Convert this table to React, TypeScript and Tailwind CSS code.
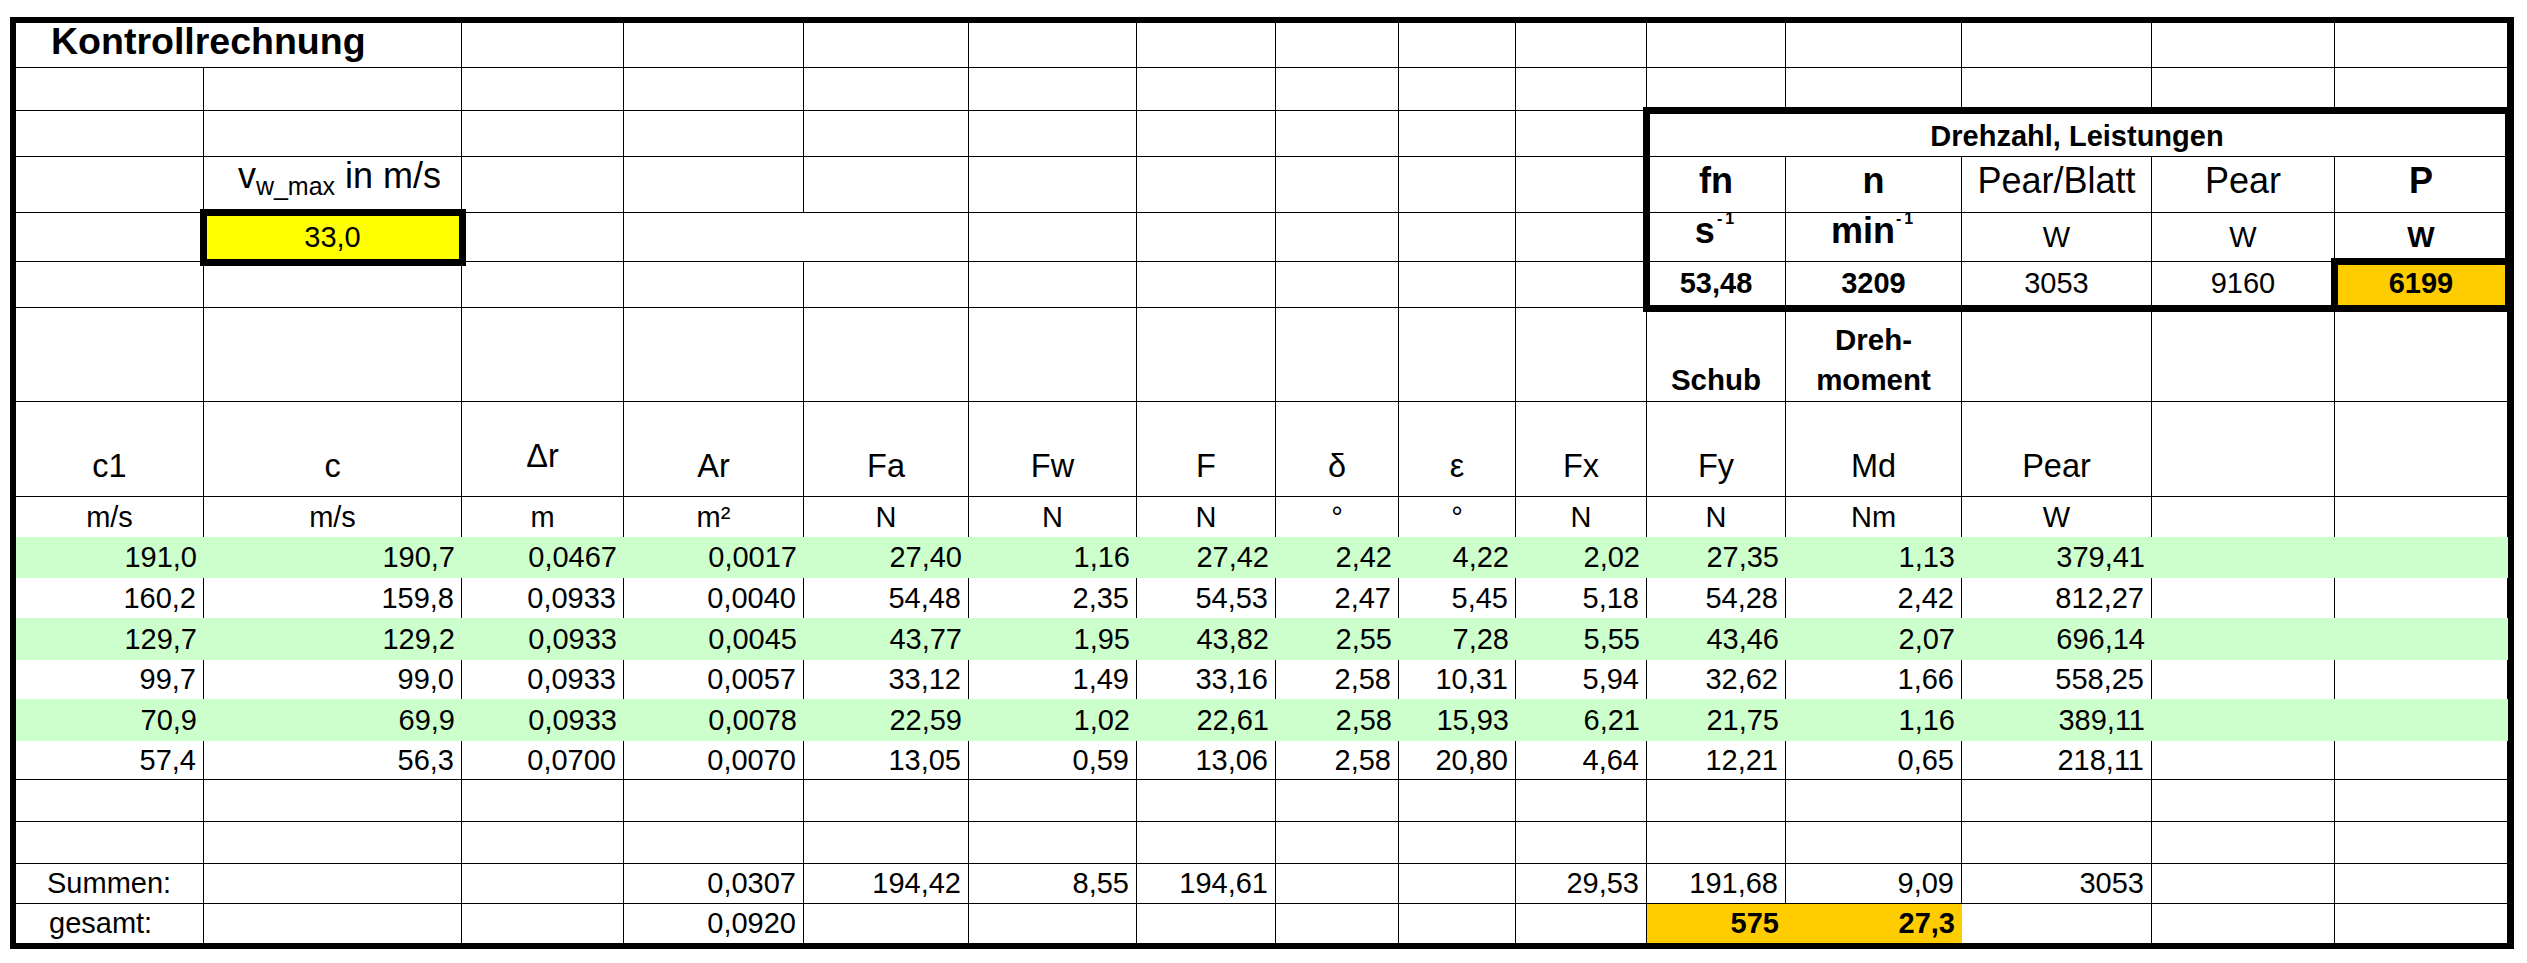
import React from 'react'

type CellProps = { className?: string; children?: React.ReactNode }

function Cell({ className = '', children }: CellProps) {
  return <div className={`flex whitespace-nowrap ${className}`}>{children}</div>
}

// gridlines: right + bottom edge of every cell
const line = 'border-r border-b border-black'
const num = 'items-center justify-end pr-[7px] text-[29px]'

const data = [
  ['191,0', '190,7', '0,0467', '0,0017', '27,40', '1,16', '27,42', '2,42', '4,22', '2,02', '27,35', '1,13', '379,41'],
  ['160,2', '159,8', '0,0933', '0,0040', '54,48', '2,35', '54,53', '2,47', '5,45', '5,18', '54,28', '2,42', '812,27'],
  ['129,7', '129,2', '0,0933', '0,0045', '43,77', '1,95', '43,82', '2,55', '7,28', '5,55', '43,46', '2,07', '696,14'],
  ['99,7', '99,0', '0,0933', '0,0057', '33,12', '1,49', '33,16', '2,58', '10,31', '5,94', '32,62', '1,66', '558,25'],
  ['70,9', '69,9', '0,0933', '0,0078', '22,59', '1,02', '22,61', '2,58', '15,93', '6,21', '21,75', '1,16', '389,11'],
  ['57,4', '56,3', '0,0700', '0,0070', '13,05', '0,59', '13,06', '2,58', '20,80', '4,64', '12,21', '0,65', '218,11'],
]

const headers = ['c1', 'c', 'Δr', 'Ar', 'Fa', 'Fw', 'F', 'δ', 'ε', 'Fx', 'Fy', 'Md', 'Pear', '', '']
const units = ['m/s', 'm/s', 'm', 'm²', 'N', 'N', 'N', '°', '°', 'N', 'N', 'Nm', 'W', '', '']
const summen = ['', '', '0,0307', '194,42', '8,55', '194,61', '', '', '29,53', '191,68', '9,09', '3053', '', '']

function empty(n: number, className = line) {
  return Array.from({ length: n }, (_, i) => <Cell key={i} className={className} />)
}

export default function App() {
  return (
    <div className="min-h-screen bg-white pt-[17px] pl-[10px]">
      <div className="grid w-fit border-[6px] border-black text-black leading-none font-['Liberation_Sans',Arial,sans-serif] grid-cols-[188px_258px_162px_180px_165px_168px_139px_123px_117px_131px_139px_176px_190px_183px_173px] grid-rows-[45px_43px_46px_56px_49px_46px_94px_95px_40px_41px_40px_42px_39px_42px_39px_42px_42px_40px_39px]">
        {/* Zeile 1 */}
        <Cell className={`${line} col-span-2 items-start pl-[35px] text-[37.5px] font-bold`}>Kontrollrechnung</Cell>
        {empty(13)}

        {/* Zeile 2 */}
        {empty(15)}

        {/* Zeile 3 */}
        {empty(10)}

        {/* Drehzahl, Leistungen */}
        <div className="col-start-11 col-span-5 row-start-3 row-span-4 grid grid-cols-[139px_176px_190px_183px_173px] grid-rows-[46px_56px_49px_46px] outline-[7px] outline-black outline-offset-[-3px]">
          <Cell className={`${line} col-span-5 items-end justify-center pb-[5px] text-[29px] font-bold`}>Drehzahl, Leistungen</Cell>

          <Cell className={`${line} items-end justify-center pb-[13px] text-[36px] font-bold`}>fn</Cell>
          <Cell className={`${line} items-end justify-center pb-[13px] text-[36px] font-bold`}>n</Cell>
          <Cell className={`${line} items-end justify-center pb-[13px] text-[36px]`}>Pear/Blatt</Cell>
          <Cell className={`${line} items-end justify-center pb-[13px] text-[36px]`}>Pear</Cell>
          <Cell className={`${line} items-end justify-center pb-[13px] text-[36px] font-bold`}>P</Cell>

          <Cell className={`${line} items-end justify-center pb-[12px] text-[36px] font-bold`}>
            <span>
              s<sup className="text-[16px] top-[-19px] ml-[2px] tracking-[3px]">-1</sup>
            </span>
          </Cell>
          <Cell className={`${line} items-end justify-center pb-[12px] text-[36px] font-bold`}>
            <span>
              min<sup className="text-[16px] top-[-19px] ml-[1px] tracking-[3px]">-1</sup>
            </span>
          </Cell>
          <Cell className={`${line} items-center justify-center text-[29px]`}>W</Cell>
          <Cell className={`${line} items-center justify-center text-[29px]`}>W</Cell>
          <Cell className={`${line} items-center justify-center text-[29px] font-bold`}>W</Cell>

          <Cell className={`${line} items-center justify-center pb-[3px] text-[29px] font-bold`}>53,48</Cell>
          <Cell className={`${line} items-center justify-center pb-[3px] text-[29px] font-bold`}>3209</Cell>
          <Cell className={`${line} items-center justify-center pb-[3px] text-[29px]`}>3053</Cell>
          <Cell className={`${line} items-center justify-center pb-[3px] text-[29px]`}>9160</Cell>
          <Cell className={`${line} bg-[#ffcc00] items-center justify-center pb-[3px] text-[29px] font-bold outline-[7px] outline-black outline-offset-[-3px]`}>6199</Cell>
        </div>

        {/* Zeile 4 */}
        <Cell className={line} />
        <Cell className={`${line} items-end justify-center pb-[18px] pl-[14px] text-[36px]`}>
          <span>
            v<sub className="text-[25px] bottom-[-7px]">w_max</sub> in m/s
          </span>
        </Cell>
        {empty(8)}

        {/* Zeile 5 */}
        <Cell className={line} />
        <Cell className={`${line} bg-[#ffff00] items-center justify-center text-[29px] outline-[7px] outline-black outline-offset-[-3px]`}>33,0</Cell>
        <Cell className={line} />
        <Cell className={`${line} col-span-2`} />
        {empty(5)}

        {/* Zeile 6 */}
        {empty(10)}

        {/* Zeile 7 */}
        {empty(10)}
        <Cell className={`${line} items-end justify-center pb-[1px] text-[29.5px] font-bold leading-[40px]`}>Schub</Cell>
        <Cell className={`${line} items-end justify-center pb-[1px] text-[29.5px] font-bold leading-[40px]`}>
          <span className="text-center">
            Dreh-
            <br />
            moment
          </span>
        </Cell>
        {empty(3)}

        {/* Kopfzeile */}
        {headers.map((h, i) => (
          <Cell
            key={i}
            className={`${line} items-end justify-center text-[32.5px] ${h === 'Δr' ? 'pb-[24px]' : 'pb-[14px]'}`}
          >
            {h}
          </Cell>
        ))}

        {/* Einheiten */}
        {units.map((u, i) => (
          <Cell key={i} className="border-r border-black items-center justify-center text-[29px]">
            {u}
          </Cell>
        ))}

        {/* Werte */}
        {data.map((row, r) =>
          [...row, '', ''].map((v, i) => (
            <Cell
              key={`${r}-${i}`}
              className={
                r % 2 === 0
                  ? `bg-[#ccffcc] ${num}`
                  : r === data.length - 1
                    ? `${line} ${num}`
                    : `border-r border-black ${num}`
              }
            >
              {v}
            </Cell>
          ))
        )}

        {/* Leerzeilen */}
        {empty(15)}
        {empty(15)}

        {/* Summen */}
        <Cell className={`${line} items-center pl-[31px] text-[29px]`}>Summen:</Cell>
        {summen.map((v, i) => (
          <Cell key={i} className={`${line} ${num}`}>
            {v}
          </Cell>
        ))}

        {/* gesamt */}
        <Cell className="border-r border-black items-center pl-[33px] text-[29px]">gesamt:</Cell>
        {empty(2, 'border-r border-black')}
        <Cell className={`border-r border-black ${num}`}>0,0920</Cell>
        {empty(6, 'border-r border-black')}
        <Cell className={`bg-[#ffcc00] font-bold ${num}`}>575</Cell>
        <Cell className={`bg-[#ffcc00] font-bold ${num}`}>27,3</Cell>
        {empty(3, 'border-r border-black')}
      </div>
    </div>
  )
}
